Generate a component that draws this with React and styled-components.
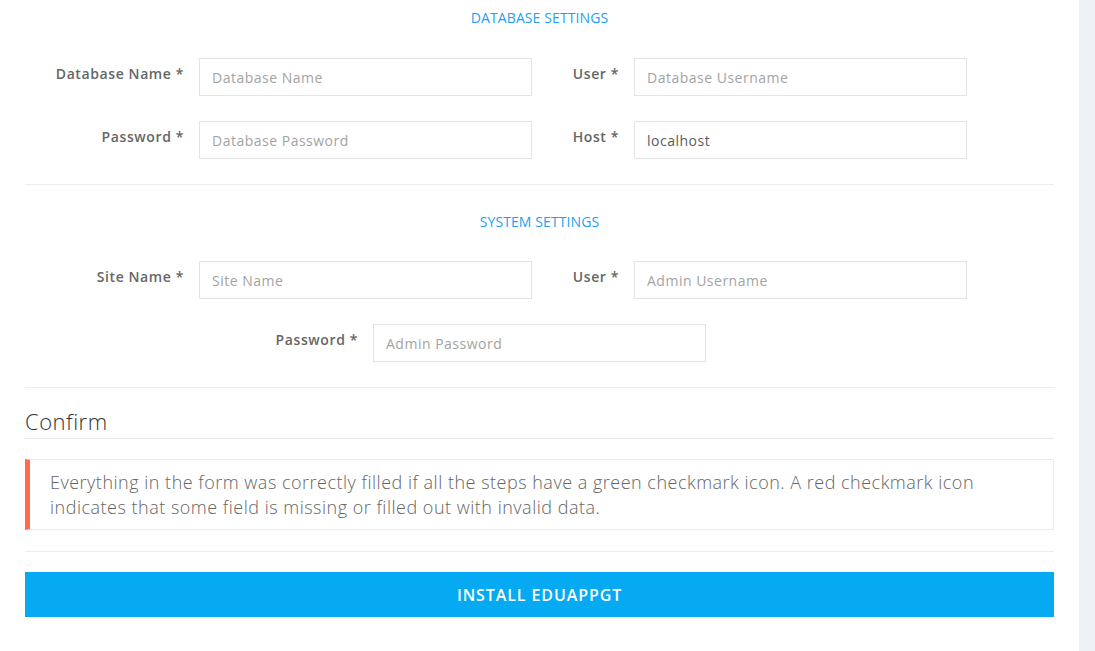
import React from 'react';
import styled, { createGlobalStyle } from 'styled-components';

const GlobalStyle = createGlobalStyle`
  * { box-sizing: border-box; }
  body {
    margin: 0;
    font-family: 'Open Sans', 'Liberation Sans', sans-serif;
    background: #edf0f5;
  }
`;

const Page = styled.div`
  display: flex;
  min-height: 100vh;
  background: #edf0f5;
`;

const Panel = styled.div`
  width: 1079px;
  background: #fff;
  padding: 0 25px 40px;
`;

const SectionTitle = styled.h4`
  margin: ${({ $top }) => $top}px 0 0;
  text-align: center;
  font-size: 14px;
  line-height: 20px;
  font-weight: 500;
  color: #1e9ff2;
  text-transform: uppercase;
  letter-spacing: 0.1px;
`;

const FieldGrid = styled.div`
  display: grid;
  grid-template-columns: 174px 333px 102px 333px;
  grid-auto-rows: 38px;
  row-gap: 25px;
  margin-top: ${({ $top }) => $top}px;
  margin-left: ${({ $offset }) => $offset || 0}px;
`;

const Label = styled.label`
  text-align: right;
  padding: 7px 15px 0 0;
  font-size: 14px;
  line-height: 18px;
  font-weight: 600;
  letter-spacing: 0.6px;
  color: #666;
`;

const Input = styled.input`
  height: 38px;
  width: 100%;
  border: 1px solid #e4e4e4;
  padding: 0 12px;
  font-family: inherit;
  font-size: 14px;
  font-weight: 400;
  letter-spacing: 0.5px;
  color: #5b5b5b;
  outline: none;
  &::placeholder {
    color: #a3a3a3;
    font-weight: 400;
  }
`;

const Divider = styled.hr`
  margin: ${({ $top }) => $top}px 0 0;
  border: 0;
  border-top: 1px solid #ececec;
`;

const ConfirmTitle = styled.h3`
  margin: 18px 0 0;
  padding-bottom: 2px;
  border-bottom: 1px solid #e6e6e6;
  font-size: 22px;
  line-height: 30px;
  font-weight: 300;
  letter-spacing: 0.5px;
  color: #333;
`;

const Callout = styled.div`
  margin-top: 20px;
  border: 1px solid #ececec;
  border-left: 5px solid #ff6c4f;
  padding: 10px 20px 9px 20px;
`;

const CalloutText = styled.p`
  margin: 0;
  max-width: 960px;
  font-size: 18px;
  line-height: 25px;
  font-weight: 300;
  letter-spacing: 0.5px;
  color: #666;
`;

const InstallButton = styled.button`
  display: block;
  width: 100%;
  height: 45px;
  margin-top: 20px;
  border: 0;
  background: #05aaf2;
  color: #fff;
  font-family: inherit;
  font-size: 16px;
  font-weight: 600;
  text-transform: uppercase;
  letter-spacing: 0.9px;
  cursor: pointer;
`;

const Field = ({ label, ...props }) => (
  <>
    <Label>{label} *</Label>
    <Input {...props} />
  </>
);

export default function App() {
  return (
    <>
      <GlobalStyle />
      <Page>
        <Panel>
          <SectionTitle $top={8}>Database Settings</SectionTitle>
          <FieldGrid $top={30}>
            <Field label="Database Name" placeholder="Database Name" />
            <Field label="User" placeholder="Database Username" />
            <Field label="Password" placeholder="Database Password" />
            <Field label="Host" defaultValue="localhost" />
          </FieldGrid>
          <Divider $top={25} />

          <SectionTitle $top={27}>System Settings</SectionTitle>
          <FieldGrid $top={29}>
            <Field label="Site Name" placeholder="Site Name" />
            <Field label="User" placeholder="Admin Username" />
          </FieldGrid>
          <FieldGrid $top={25} $offset={174}>
            <Field label="Password" placeholder="Admin Password" />
          </FieldGrid>
          <Divider $top={25} />

          <ConfirmTitle>Confirm</ConfirmTitle>
          <Callout>
            <CalloutText>
              Everything in the form was correctly filled if all the steps have a green
              checkmark icon. A red checkmark icon indicates that some field is missing or
              filled out with invalid data.
            </CalloutText>
          </Callout>
          <Divider $top={21} />
          <InstallButton>Install EduAppGT</InstallButton>
        </Panel>
      </Page>
    </>
  );
}
